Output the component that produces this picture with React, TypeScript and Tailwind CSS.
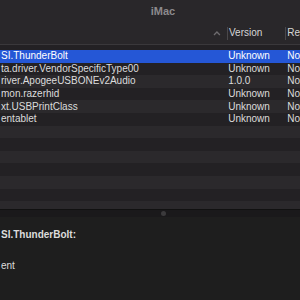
const rows = [
  { name: "SI.ThunderBolt", version: "Unknown", selected: true },
  { name: "ta.driver.VendorSpecificType00", version: "Unknown" },
  { name: "river.ApogeeUSBONEv2Audio", version: "1.0.0" },
  { name: "mon.razerhid", version: "Unknown" },
  { name: "xt.USBPrintClass", version: "Unknown" },
  { name: "entablet", version: "Unknown" },
];

const blanks = Array.from({ length: 8 }, (_, i) => i);

function Row({ name, version, selected, index }: { name?: string; version?: string; selected?: boolean; index: number }) {
  const bg = selected ? "bg-[#2557d6]" : index % 2 === 0 ? "bg-[#2b292c]" : "bg-[#232124]";
  return (
    <div className={`flex items-center h-[12.6px] shrink-0 ${bg} ${selected ? "text-white" : "text-[#dcdcdc]"}`}>
      <div className="w-[232px] pl-[1px] whitespace-nowrap overflow-hidden">{name}</div>
      <div className="w-[60px] whitespace-nowrap">{version}</div>
      <div className="whitespace-nowrap">{name ? "No" : ""}</div>
    </div>
  );
}

export default function App() {
  return (
    <div
      className="w-[300px] h-[300px] overflow-hidden flex flex-col bg-[#1e1e1e] text-[10px] leading-none"
      style={{ fontFamily: '"Liberation Sans", Arial, sans-serif' }}
    >
      <div className="h-[45px] shrink-0 bg-[#29272a] border-b border-[#3a383b] flex flex-col">
        <div className="h-[22px] flex items-center justify-center pl-[26px] text-[11px] font-bold text-[#8c8a8d]">
          iMac
        </div>
        <div className="h-[22px] flex items-center text-[#d6d6d6] font-medium">
          <div className="w-[216px]" />
          <svg width="8" height="6" viewBox="0 0 8 6" className="mr-[6px]">
            <path d="M1 5 L4 2 L7 5" stroke="#6e6c6f" strokeWidth="1.3" fill="none" />
          </svg>
          <div className="w-[1px] h-[13px] bg-[#4a484b] mr-[1px]" />
          <div className="w-[57px]">Version</div>
          <div className="w-[1px] h-[13px] bg-[#4a484b] mr-[1px]" />
          <div>Re</div>
        </div>
      </div>
      <div className="h-[164px] shrink-0 overflow-hidden bg-[#232124] pt-[5px] flex flex-col">
        {rows.map((r, i) => (
          <Row key={i} index={i} {...r} />
        ))}
        {blanks.map((i) => (
          <Row key={"b" + i} index={i + rows.length} />
        ))}
      </div>
      <div className="h-[8px] shrink-0 bg-[#1a191b] border-t border-[#111] flex items-center justify-center pl-[26px]">
        <div className="w-[5px] h-[5px] rounded-full bg-[#3b3a3c]" />
      </div>
      <div className="flex-1 bg-[#1e1e1e] text-[#dcdcdc] pt-[13px]">
        <div className="pl-[1px] font-bold">SI.ThunderBolt:</div>
        <div className="pl-[1px] mt-[21px]">ent</div>
      </div>
    </div>
  );
}
